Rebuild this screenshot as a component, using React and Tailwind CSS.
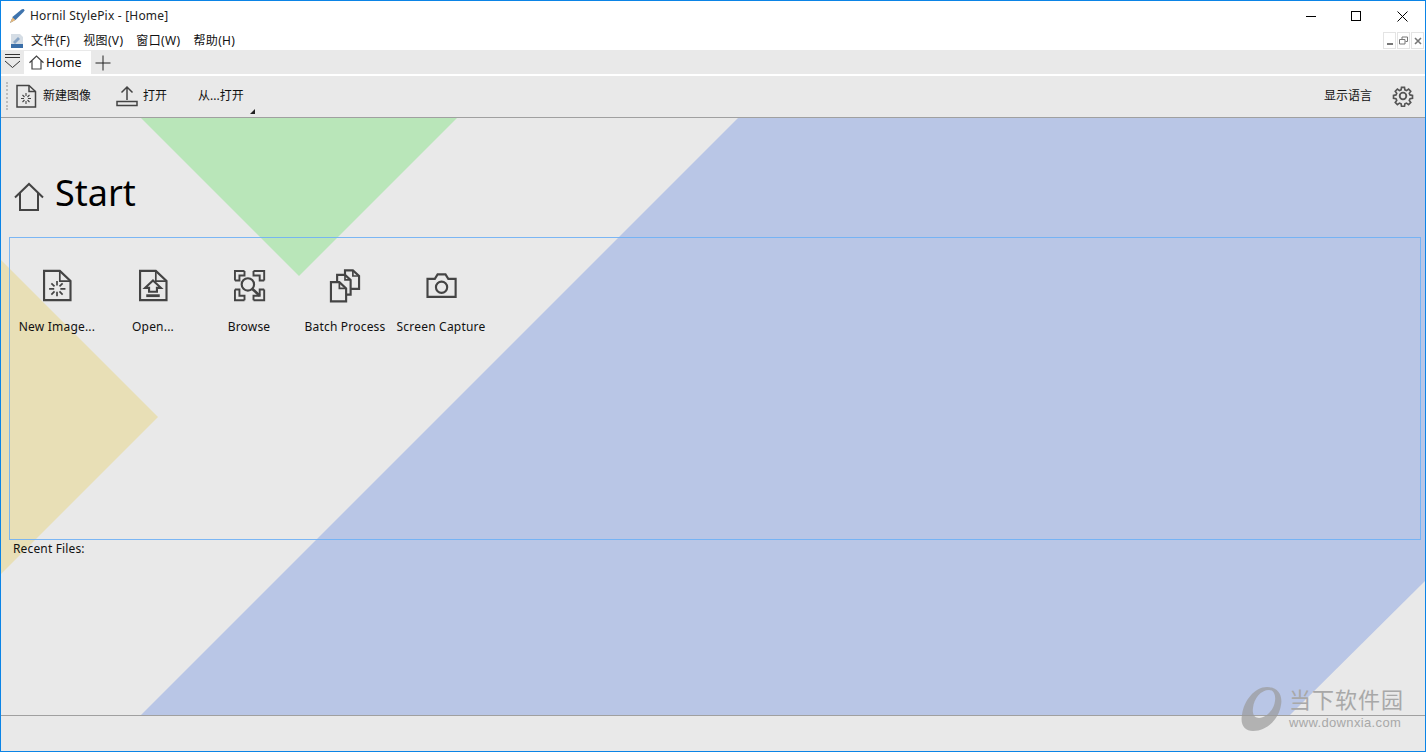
const FONT = { fontFamily: '"Noto Sans", "Noto Sans CJK SC", sans-serif' };

function Ic({ children }) {
  return (
    <svg width="36" height="36" viewBox="0 0 32 32" fill="none" stroke="#444" strokeWidth="1.900">
      {children}
    </svg>
  );
}

const NewIcon = () => (
  <Ic>
    <path d="M4.500 3.500H18.500L28 12.500V29.500H4.500Z" />
    <path d="M18.500 3.500V12.500H28" strokeWidth="1.500" />
    <path d="M16 12.500V16.500M16 22V26M9 19.500H13.500M19 19.500H23.500M11 14.500L13.800 17.300M21 24.500L18.200 21.700M21 14.500L18.200 17.300M11 24.500L13.800 21.700" strokeWidth="1.500" />
  </Ic>
);
const OpenIcon = () => (
  <Ic>
    <path d="M4.500 3.500H18.500L28 12.500V29.500H4.500Z" />
    <path d="M18.500 3.500V12.500H28" strokeWidth="1.500" />
    <path d="M16 12L23 18.500H19.500V22H12.500V18.500H9Z" />
    <path d="M10 25.500H22" strokeWidth="2.500" />
  </Ic>
);
const BrowseIcon = () => (
  <Ic>
    <path d="M3.500 12V3.500H12M20 3.500H29.500V12M3.500 20V29.500H12M20 29.500H29.500V20M3.500 12H7.500V7.500H12V3.500M20 3.500V7.500H25.500V12H29.500M3.500 20H7.500V25.500H12V29.500M20 29.500V25.500H25.500V20H29.500" strokeWidth="1.700" />
    <circle cx="15" cy="15.500" r="5.500" />
    <path d="M19 19.500L25.500 25.500" strokeWidth="2.400" />
  </Ic>
);
const BatchIcon = () => (
  <Ic>
    <path d="M3.500 13.500H11L17 19V30.500H3.500Z" />
    <path d="M11 13.500V19H17" strokeWidth="1.500" />
    <path d="M9 13V7H16L21 11.500V24.500H17" />
    <path d="M16 7V11.500H21" strokeWidth="1.500" />
    <path d="M16 7V3H23L28.500 8V19.500H21" />
    <path d="M23 3V8H28.500" strokeWidth="1.500" />
  </Ic>
);
const CameraIcon = () => (
  <Ic>
    <path d="M4 10.500H10.500L13 6.500H20L22.500 10.500H29V26.500H4Z" />
    <circle cx="16.500" cy="18" r="5" />
  </Ic>
);
const Home = ({ size }) => (
  <svg width={size} height={size} viewBox="0 0 30 30" fill="none" stroke="#444" strokeWidth={size > 20 ? 2 : 2.400}>
    <path d="M1 15.500L15 2L29 15.500M6 11V28H24V11" />
  </svg>
);
const Gear = () => (
  <svg width="22" height="22" viewBox="0 0 24 24" fill="none" stroke="#555" strokeWidth="2">
    <circle cx="12" cy="12" r="3.600" />
    <path d="M10.200 1.500h3.600l.5 3 2 .9 2.500-1.800 2.600 2.600-1.800 2.500.9 2 3 .5v3.600l-3 .5-.9 2 1.800 2.500-2.600 2.600-2.500-1.800-2 .9-.5 3h-3.600l-.5-3-2-.9-2.500 1.800-2.600-2.600 1.800-2.500-.9-2-3-.5v-3.600l3-.5.9-2-1.800-2.500 2.600-2.600 2.500 1.800 2-.9z" transform="translate(12 12) scale(.9) translate(-12 -12)" />
  </svg>
);

const tiles = [
  [NewIcon, "New Image..."],
  [OpenIcon, "Open..."],
  [BrowseIcon, "Browse"],
  [BatchIcon, "Batch Process"],
  [CameraIcon, "Screen Capture"],
];

function MdiBtn({ children }) {
  return (
    <div className="w-[13px] h-[17px] border border-[#e4e4e4] bg-white flex items-center justify-center">
      {children}
    </div>
  );
}

export default function App() {
  return (
    <div style={FONT} className="w-[1426px] h-[752px] flex flex-col overflow-hidden bg-white border border-[#0b84e6] text-[12px] text-black">
      {/* title bar */}
      <div className="h-[30px] flex items-center shrink-0 bg-white">
        <svg width="17" height="16" viewBox="0 0 17 16" className="ml-[8px]">
          <path d="M1 15L4 8.500L12.500 1.500C14 .5 15.500 1 15.500 2.500L14.500 4L7 11.500Z" fill="#3f74ad" />
          <path d="M1 15L3.500 9.500L6.500 12Z" fill="#e8b878" />
        </svg>
        <span className="ml-[4px] tracking-[0.2px] text-[#222]">Hornil StylePix - [Home]</span>
        <div className="ml-auto flex items-center">
          <div className="w-[45px] flex justify-center">
            <div className="w-[10px] h-px bg-black" />
          </div>
          <div className="w-[46px] flex justify-center">
            <div className="w-[10px] h-[10px] border border-black" />
          </div>
          <div className="w-[46px] flex justify-center">
            <svg width="11" height="11" viewBox="0 0 11 11" stroke="#000" strokeWidth="1"><path d="M.5.500L10.500 10.500M10.500.500L.5 10.500" /></svg>
          </div>
        </div>
      </div>
      {/* menu bar */}
      <div className="h-[19px] flex items-center shrink-0 bg-white">
        <svg width="16" height="16" viewBox="0 0 16 16" className="ml-[8px]">
          <path d="M2 1H11L14 4V15H2Z" fill="#d5dde5" />
          <path d="M4 9L9 4L11 6L6 11Z" fill="#8aa6c6" />
          <rect x="2" y="11" width="12" height="4" fill="#3a6ea8" />
        </svg>
        {["文件(F)", "视图(V)", "窗口(W)", "帮助(H)"].map((m) => (
          <span key={m} className="pl-[6px] pr-[7px] tracking-[0.35px] text-[#111] whitespace-nowrap">{m}</span>
        ))}
        <div className="ml-auto mr-[1px] flex gap-px">
          <MdiBtn><div className="w-[6px] h-[2px] bg-[#777] mt-[6px]" /></MdiBtn>
          <MdiBtn>
            <svg width="9" height="9" viewBox="0 0 9 9" fill="none" stroke="#777"><path d="M.5 3.500H6V8H.5ZM3 3V1H8.500V5.500H6.500" /></svg>
          </MdiBtn>
          <MdiBtn>
            <svg width="8" height="8" viewBox="0 0 8 8" stroke="#777" strokeWidth="1.600"><path d="M1 1L7 7M7 1L1 7" /></svg>
          </MdiBtn>
        </div>
      </div>
      {/* tab strip */}
      <div className="h-[24px] flex items-end shrink-0 bg-[#e9e9e9]">
        <div className="w-[23px] h-[24px] flex items-start justify-center">
          <svg width="17" height="17" viewBox="0 0 17 17" fill="none" stroke="#333" className="mt-[3px] ml-[-1px]">
            <path d="M1 1.500H16M1 4.500H16M1 8L8.500 14.500L16 8" />
          </svg>
        </div>
        <div className="w-[67px] h-[23px] bg-white flex items-center pl-[5px] gap-[2px]">
          <Home size={15} />
          <span className="text-[12.500px] text-[#111] mt-[1px]">Home</span>
        </div>
        <div className="w-[24px] h-[23px] flex items-center justify-center">
          <svg width="16" height="16" viewBox="0 0 16 16" stroke="#222"><path d="M8 .5V15.500M.5 8H15.500" /></svg>
        </div>
      </div>
      <div className="h-[2px] bg-white mr-[1px] shrink-0" />
      {/* toolbar */}
      <div className="h-[42px] flex items-center shrink-0 bg-[#e9e9e9] border-b border-[#a0a0a0] relative pb-[1px]">
        <div className="ml-[5px] w-[2px] h-[28px] border-l-2 border-dotted border-[#bdbdbd]" />
        <svg width="22" height="24" viewBox="0 0 22 24" fill="none" stroke="#444" strokeWidth="1.500" className="ml-[7px]">
          <path d="M2 1.500H14L20.500 7.500V23H2Z" />
          <path d="M14 1.500V7.500H20.500" />
          <path d="M11 9V12M11 17V20M6 14.500H9M13 14.500H16M7.500 11L9.500 13M14.500 18L12.500 16M14.500 11L12.500 13M7.500 18L9.500 16" strokeWidth="1.100" />
        </svg>
        <span className="ml-[6px] text-[#111]">新建图像</span>
        <svg width="22" height="22" viewBox="0 0 22 22" fill="none" stroke="#444" strokeWidth="1.500" className="ml-[25px]">
          <path d="M11 15V2M5.500 7.500L11 2L16.500 7.500" />
          <rect x="1" y="16.500" width="20" height="4" />
        </svg>
        <span className="ml-[5px] text-[#111]">打开</span>
        <span className="ml-[31px] text-[#111]">从...打开</span>
        <div className="absolute left-[249px] top-[33px] w-0 h-0 border-l-[5px] border-l-transparent border-b-[5px] border-b-[#222]" />
        <span className="ml-auto text-[#111]">显示语言</span>
        <div className="ml-[20px] mr-[11px]"><Gear /></div>
      </div>
      {/* main */}
      <div className="relative flex-1 bg-[#e9e9e9] overflow-hidden border-b border-[#a0a0a0] mr-[-1px]">
        <svg className="absolute left-0 top-0" width="1426" height="597" viewBox="0 0 1426 597">
          <path d="M140 0H456L298 158Z" fill="#b9e6b9" />
          <path d="M-1 141L157 299L-1 457Z" fill="#e8dfb6" />
          <path d="M737 0H1426V461L1289 597H140Z" fill="#b9c6e6" />
        </svg>
        <div className="relative">
          <div className="flex items-center pl-[13px] pt-[39px] h-[119px]">
            <Home size={30} />
            <span className="ml-[11px] text-[36px] leading-none text-black mt-[-8px]">Start</span>
          </div>
          <div className="ml-[8px] mr-[5px] h-[303px] border border-[#6fb0f5]/90 flex items-start">
            <div className="flex -ml-px">
              {tiles.map(([I, label]) => (
                <div key={label} className="w-[96px] flex flex-col items-center pt-[29px]">
                  <I />
                  <span className="mt-[15px] tracking-[0.2px] text-[#111] whitespace-nowrap">{label}</span>
                </div>
              ))}
            </div>
          </div>
          <div className="ml-[12px] tracking-[0.15px] text-[#111]">Recent Files:</div>
        </div>
      </div>
      {/* status */}
      <div className="h-[35px] bg-[#e9e9e9] shrink-0" />
      {/* watermark */}
      <div className="absolute left-[1240px] top-[686px] flex items-start">
        <svg width="44" height="46" viewBox="0 0 44 46">
          <path fillRule="evenodd" d="M27 1C37 1 43 8 41 19C39 33 27 45 13 45C5 45 0 39 2 29C4 14 15 1 27 1ZM29 4C21 4 14 12 13 22C12 29 15 32 19 32C26 32 34 24 35 15C36 8 33 4 29 4Z" fill="#9a9a9a" fillOpacity="0.7" />
        </svg>
        <div className="ml-[5px] flex flex-col items-start">
          <span className="text-[22px] leading-[26px] tracking-[1px] text-[#a8a8a8]">当下软件园</span>
          <span style={{ fontFamily: '"Liberation Sans", sans-serif' }} className="text-[13px] leading-[16px] mt-[3px] tracking-[0.35px] text-[#a8a8a8]">www.downxia.com</span>
        </div>
      </div>
    </div>
  );
}
